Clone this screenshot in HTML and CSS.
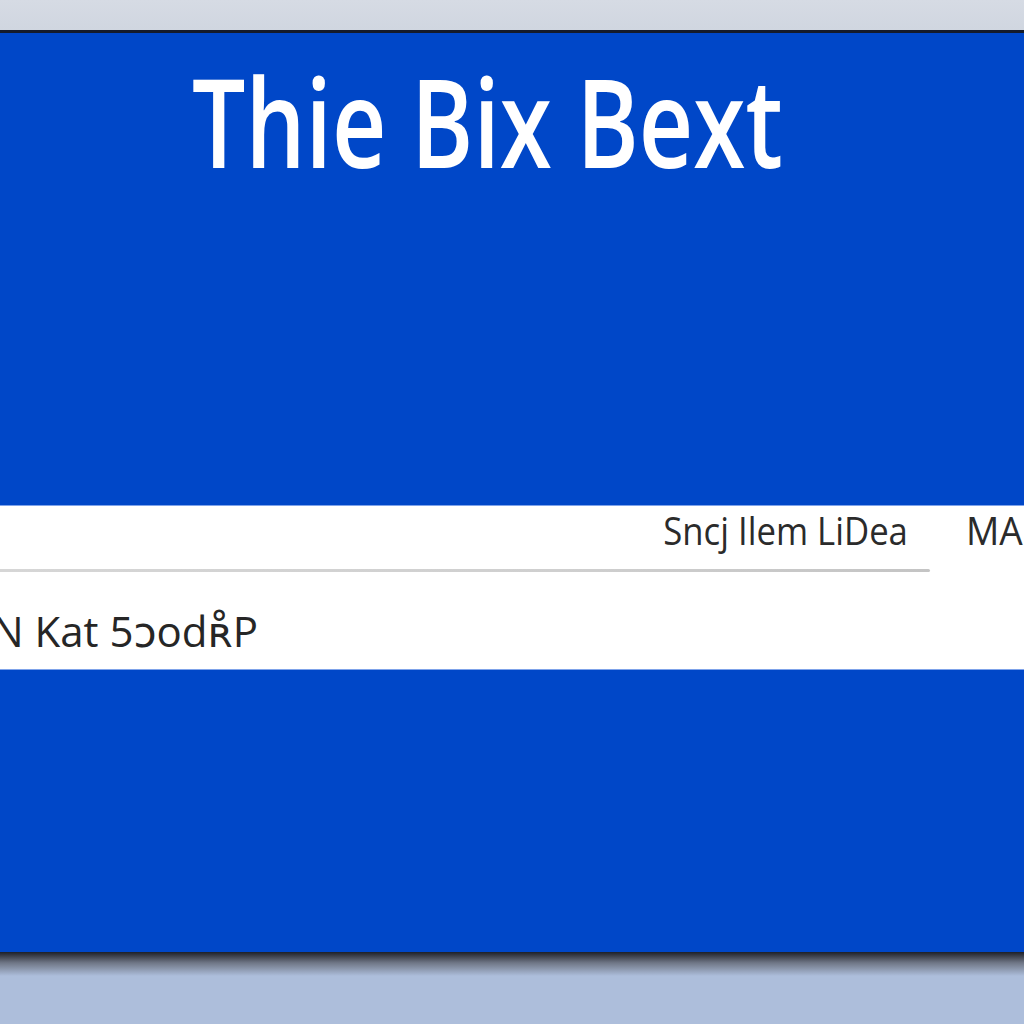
FILE: index.html
```html
<!DOCTYPE html>
<html lang="en">
<head>
<meta charset="utf-8">
<title>Thie Bix Bext</title>
<link rel="stylesheet" href="styles.css">
</head>
<body>
<div class="topbar"></div>
<main class="panel">
  <h1 class="title"><span class="title-text">Thie Bix Bext</span></h1>
  <section class="band">
    <div class="band-row-top">
      <span class="menu-text">Sncj Ilem LiDea</span>
      <span class="menu-text menu-ma">MA</span>
    </div>
    <div class="band-rule"></div>
    <div class="band-row-bottom">
      <span class="info-text">N Kat 5ɔodʀ̊P</span>
    </div>
  </section>
</main>
<div class="shadow"></div>
</body>
</html>
```
FILE: styles.css
```css
html, body {
  margin: 0;
  padding: 0;
}
body {
  background: #adbedb;
  width: 1024px;
  height: 1024px;
  overflow: hidden;
  font-family: "Open Sans", "DejaVu Sans", sans-serif;
}
.topbar {
  height: 30px;
  background: linear-gradient(#d6dbe4, #d0d6e0);
  border-bottom: 3px solid #151b2a;
}
.panel {
  height: 919px;
  background: #0047c8;
  display: flex;
  flex-direction: column;
  overflow: hidden;
}
.title {
  margin: 0;
  padding: 25px 0 0 192px;
  font-size: 124px;
  line-height: 124px;
  height: 124px;
  font-weight: 600;
  color: #ffffff;
  white-space: nowrap;
}
.title-text {
  display: inline-block;
  transform: scaleX(0.763);
  transform-origin: left center;
}
.band {
  margin-top: 323px;
  height: 163px;
  background: #ffffff;
  border-top: 1px solid #7fa3ea;
  border-bottom: 1px solid #7fa3ea;
  display: flex;
  flex-direction: column;
}
.band-row-top {
  height: 63px;
  display: flex;
  align-items: flex-start;
  justify-content: flex-end;
  gap: 58px;
  white-space: nowrap;
  overflow: hidden;
}
.menu-text {
  display: inline-block;
  font-size: 39px;
  line-height: 39px;
  padding-top: 4px;
  font-weight: 500;
  color: #2b2b2b;
  transform: scaleX(0.89);
  transform-origin: right center;
}
.menu-ma {
  width: 58px;
  transform-origin: left center;
  transform: scaleX(0.95);
}
.band-rule {
  width: 930px;
  height: 3px;
  background: linear-gradient(90deg, #d6d6d6, #cfcfcf 60%, #c4c4c4);
  border-radius: 0 2px 2px 0;
}
.band-row-bottom {
  padding: 38px 0 0 0;
  white-space: nowrap;
}
.info-text {
  display: inline-block;
  margin-left: -8px;
  font-size: 42px;
  line-height: 42px;
  font-weight: 500;
  color: #262626;
}
.shadow {
  height: 24px;
  background: linear-gradient(#1e2028, #6f7686 45%, #adbedb);
}
```
